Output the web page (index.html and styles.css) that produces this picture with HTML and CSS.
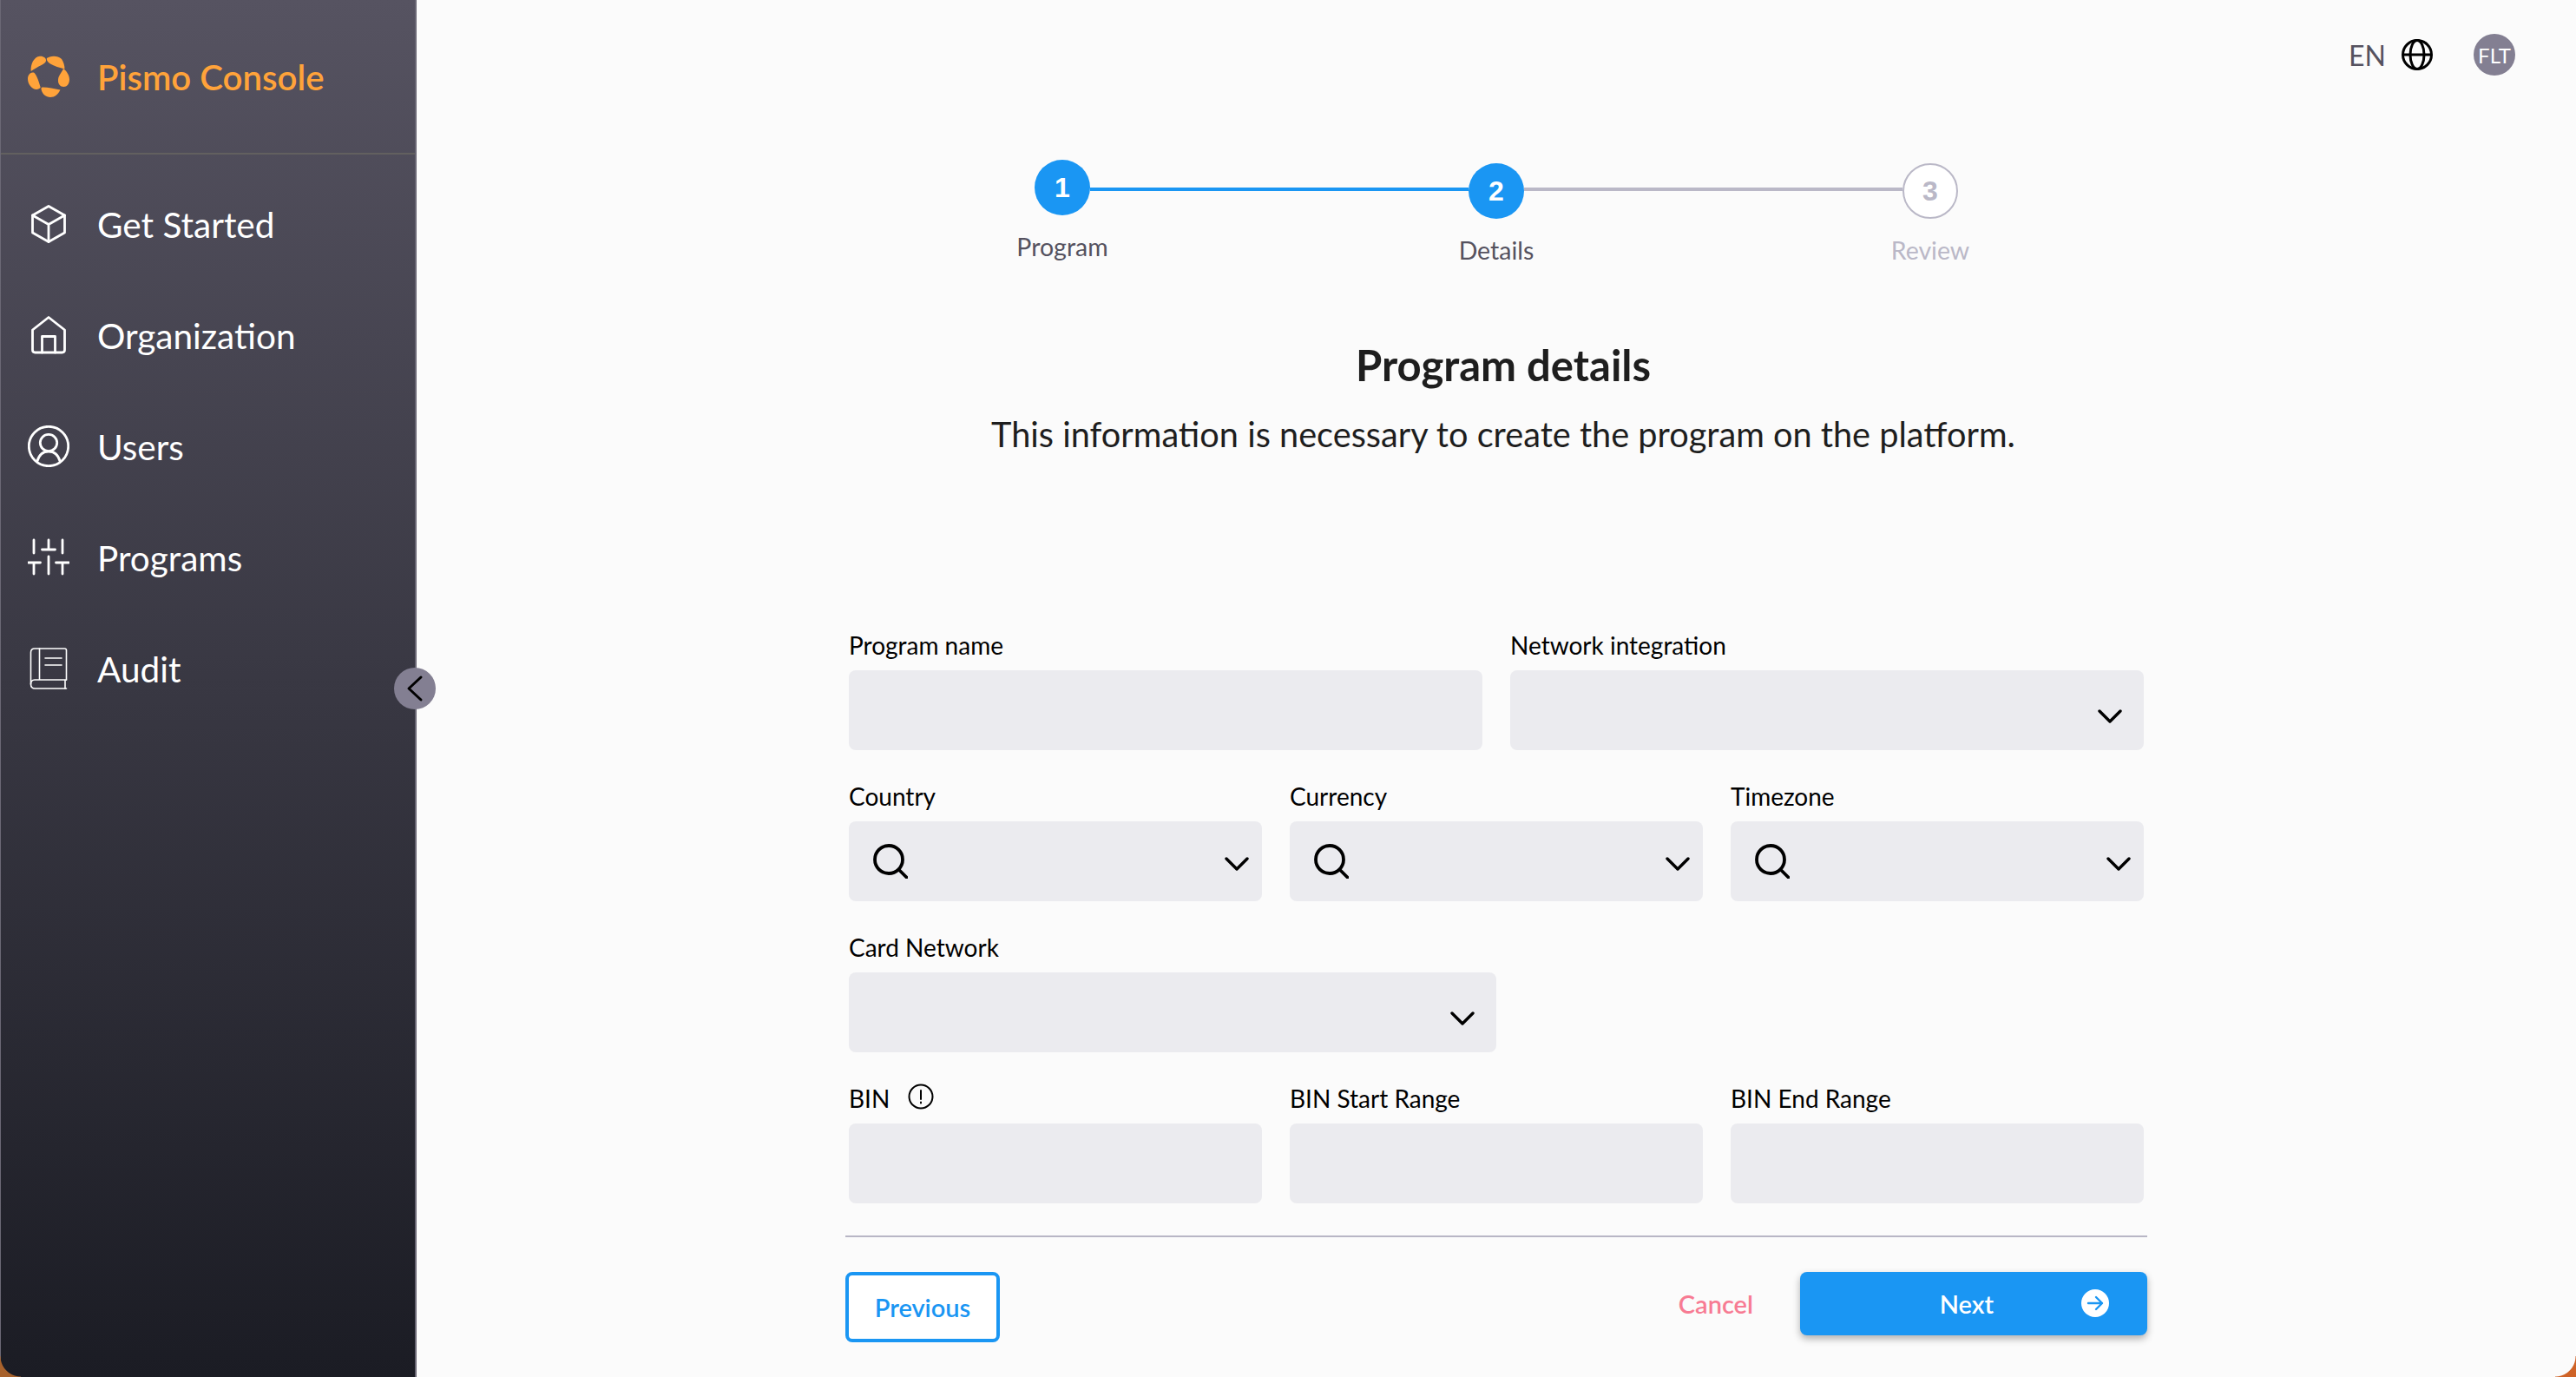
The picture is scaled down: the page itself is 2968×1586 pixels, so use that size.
FILE: index.html
```html
<!DOCTYPE html>
<html lang="en">
<head>
    <meta charset="UTF-8">
    <meta name="viewport" content="width=device-width, initial-scale=1.0">
    <title>Pismo Console</title>
    <link rel="stylesheet" href="styles.css">
</head>
<body>
    <div class="app">
        <!-- Sidebar -->
        <aside class="sidebar">
            <div class="brand">
                <svg class="nav-icon" viewBox="0 0 48 48" fill="#ffa33a">
                    <path d="M22 3C25 .5 34-1 39 4c2 3 3.500 7 3.500 11.500C37 14 30 12 26 9.500c-2-1.200-5-4-4-6.500z"/>
                    <path d="M41 15c4 3 7 8 7 12.500 0 5-3 8.500-6.500 8.500-4 0-7-3-6.500-8.500.5-4.500 4-8 6-12.500z"/>
                    <path d="M37.500 39.500c-2.500 5-6.500 8.500-11.500 8.500-5 0-9.500-3.500-10.500-9.500-.2-1.500.5-2 2-2 6 0 13 1.500 20 3z"/>
                    <path d="M5.500 19.500C2 20 0 23 0 27c0 6 5 12 10 12 2 0 4-1 4.700-2.500C13 31 11 24 8 20.500c-.5-1-1.500-1.200-2.500-1z"/>
                    <path d="M3.700 18C3 10 7 1.500 14 .8c4-.3 7.500 2.200 7 5.200-.5 4-9 6-17.300 12z"/>
                </svg>
                <span class="brand-name">Pismo Console</span>
            </div>
            <nav class="nav">
                <a class="nav-item">
                    <svg class="nav-icon stroke-icon" viewBox="0 0 48 48">
                        <path d="M24 3.500L42.500 14v20L24 44.500 5.500 34V14z"/>
                        <path d="M5.500 14L24 24.500 42.500 14M24 24.500v20"/>
                    </svg>
                    Get Started
                </a>
                <a class="nav-item">
                    <svg class="nav-icon stroke-icon" viewBox="0 0 48 48">
                        <path d="M24 3.500L42.500 18v23q0 3-3 3h-31q-3 0-3-3V18z"/>
                        <path d="M16.500 44V25.500h15V44"/>
                    </svg>
                    Organization
                </a>
                <a class="nav-item">
                    <svg class="nav-icon stroke-icon" viewBox="0 0 48 48">
                        <circle cx="24" cy="24" r="22.700"/>
                        <circle cx="24" cy="20" r="9.700"/>
                        <path d="M11 41c2-7 7-11 13-11s11 4 13 11"/>
                    </svg>
                    Users
                </a>
                <a class="nav-item">
                    <svg class="nav-icon stroke-icon" viewBox="0 0 48 48">
                        <path d="M7 4v15M.5 30h14M7 30v13M24 4v11M16.500 15h15M24 23v20M40 4v15M32.500 30h15M40 30v13"/>
                    </svg>
                    Programs
                </a>
                <a class="nav-item">
                    <svg class="nav-icon stroke-icon thin" viewBox="0 0 48 48">
                        <path d="M44.500 37V3q0-2-2-2H8Q3.500 1 3.500 5.500V42q0 5 5 5h36"/>
                        <path d="M44.500 37H8q-4.500 0-4.500 5M13.500 1v36M20 12h19M20 20h19M43 37v10"/>
                    </svg>
                    Audit
                </a>
            </nav>
            <button class="collapse-btn">
                <svg viewBox="0 0 48 48" class="collapse-icon"><path d="M31 11L17 24l14 13"/></svg>
            </button>
        </aside>

        <main class="main">
            <div class="topbar">
                <span class="lang">EN</span>
                <svg class="globe" viewBox="0 0 36 36">
                    <circle cx="18" cy="18" r="16.500"/>
                    <ellipse cx="18" cy="18" rx="8" ry="16.500"/>
                    <path d="M1.500 18h33"/>
                </svg>
                <div class="avatar">FLT</div>
            </div>

            <!-- Steps -->
            <div class="stepper">
                <div class="step step-first">
                    <div class="step-dot">1</div>
                    <div class="step-label">Program</div>
                </div>
                <div class="step-line"></div>
                <div class="step">
                    <div class="step-dot">2</div>
                    <div class="step-label">Details</div>
                </div>
                <div class="step-line step-line-off"></div>
                <div class="step step-off">
                    <div class="step-dot">3</div>
                    <div class="step-label">Review</div>
                </div>
            </div>

            <div class="intro">
                <h1>Program details</h1>
                <p>This information is necessary to create the program on the platform.</p>
            </div>

            <form class="form">
                <div class="form-row cols-2">
                    <div class="field">
                        <label>Program name</label>
                        <div class="box"></div>
                    </div>
                    <div class="field">
                        <label>Network integration</label>
                        <div class="box box-wide">
                            <svg class="chevron" viewBox="0 0 28 16"><path d="M2 2l12 12L26 2"/></svg>
                        </div>
                    </div>
                </div>
                <div class="form-row cols-3">
                    <div class="field">
                        <label>Country</label>
                        <div class="box box-search">
                            <svg class="search" viewBox="0 0 40 40"><circle cx="18" cy="18" r="16"/><path d="M29.500 29.500L38.500 38.500"/></svg>
                            <svg class="chevron chevron-low" viewBox="0 0 28 16"><path d="M2 2l12 12L26 2"/></svg>
                        </div>
                    </div>
                    <div class="field">
                        <label>Currency</label>
                        <div class="box box-search">
                            <svg class="search" viewBox="0 0 40 40"><circle cx="18" cy="18" r="16"/><path d="M29.500 29.500L38.500 38.500"/></svg>
                            <svg class="chevron chevron-low" viewBox="0 0 28 16"><path d="M2 2l12 12L26 2"/></svg>
                        </div>
                    </div>
                    <div class="field">
                        <label>Timezone</label>
                        <div class="box box-search">
                            <svg class="search" viewBox="0 0 40 40"><circle cx="18" cy="18" r="16"/><path d="M29.500 29.500L38.500 38.500"/></svg>
                            <svg class="chevron chevron-low" viewBox="0 0 28 16"><path d="M2 2l12 12L26 2"/></svg>
                        </div>
                    </div>
                </div>
                <div class="form-row tight">
                    <div class="field">
                        <label>Card Network</label>
                        <div class="box box-wide">
                            <svg class="chevron" viewBox="0 0 28 16"><path d="M2 2l12 12L26 2"/></svg>
                        </div>
                    </div>
                </div>
                <div class="form-row cols-3">
                    <div class="field">
                        <label>BIN
                            <svg class="info" viewBox="0 0 30 30"><circle cx="15" cy="15" r="13.500"/><path d="M15 8v10M15 21.500v1"/></svg>
                        </label>
                        <div class="box"></div>
                    </div>
                    <div class="field">
                        <label>BIN Start Range</label>
                        <div class="box"></div>
                    </div>
                    <div class="field">
                        <label>BIN End Range</label>
                        <div class="box"></div>
                    </div>
                </div>
            </form>

            <div class="actions">
                <button class="btn-prev">Previous</button>
                <div class="actions-right">
                    <a class="cancel">Cancel</a>
                    <button class="btn-next">
                        Next
                        <span class="next-arrow">
                            <svg viewBox="0 0 32 32"><path d="M8 16h16M17 9l7 7-7 7"/></svg>
                        </span>
                    </button>
                </div>
            </div>
        </main>
        <div class="corner corner-left"></div>
        <div class="corner corner-right"></div>
    </div>
</body>
</html>
```

FILE: styles.css
```css
* {
    box-sizing: border-box;
}
html, body {
    margin: 0;
    padding: 0;
}
body {
    font-family: Lato, Arial, sans-serif;
    background: #fbfbfb;
}
.app {
    display: flex;
    position: relative;
    width: 2968px;
    height: 1586px;
    overflow: hidden;
}

/* Sidebar */
.sidebar {
    position: relative;
    width: 480px;
    height: 100%;
    flex-shrink: 0;
    background: linear-gradient(180deg, #565361 0%, #1b1c24 100%);
    border-left: 1px solid #6b6875;
    border-right: 2px solid #6b6875;
    color: #fff;
}
.brand {
    display: flex;
    align-items: center;
    height: 178px;
    padding-left: 31px;
    gap: 32px;
    border-bottom: 2px solid #62605f;
}
.brand-name {
    color: #ffa33a;
    font-size: 40.200px;
    font-weight: 600;
}
.nav {
    display: flex;
    flex-direction: column;
    padding-top: 16px;
}
.nav-item {
    display: flex;
    align-items: center;
    height: 128px;
    padding-left: 31px;
    gap: 32px;
    font-size: 40.500px;
    color: #fff;
}
.nav-icon {
    width: 48px;
    height: 48px;
    flex-shrink: 0;
}
.stroke-icon {
    fill: none;
    stroke: #fff;
    stroke-width: 2.800;
    stroke-linecap: round;
    stroke-linejoin: round;
}
.stroke-icon.thin {
    stroke-width: 1.600;
}
.collapse-btn {
    position: absolute;
    right: -24px;
    top: 769px;
    width: 48px;
    height: 48px;
    padding: 0;
    border: 0;
    border-radius: 50%;
    background: #837f92;
}
.collapse-icon {
    display: block;
    fill: none;
    stroke: #000;
    stroke-width: 3;
    stroke-linecap: round;
    stroke-linejoin: round;
}

/* Main */
.main {
    flex: 1;
    display: flex;
    flex-direction: column;
    align-items: center;
}
.topbar {
    align-self: stretch;
    display: flex;
    align-items: center;
    justify-content: flex-end;
    height: 48px;
    margin-top: 39px;
    padding-right: 70px;
}
.lang {
    font-size: 32px;
    color: #55525f;
}
.globe {
    width: 36px;
    height: 36px;
    margin-left: 18px;
    fill: none;
    stroke: #000;
    stroke-width: 3;
}
.avatar {
    display: flex;
    align-items: center;
    justify-content: center;
    width: 48px;
    height: 48px;
    margin-left: 47px;
    border-radius: 50%;
    background: #837f92;
    color: #fff;
    font-size: 24px;
}

/* Steps */
.stepper {
    display: flex;
    width: 1064px;
    margin-top: 97px;
}
.step {
    display: flex;
    flex-direction: column;
    align-items: center;
    width: 64px;
    margin-top: 4px;
}
.step-first {
    margin-top: 0;
}
.step-dot {
    display: flex;
    align-items: center;
    justify-content: center;
    flex-shrink: 0;
    width: 64px;
    height: 64px;
    border-radius: 50%;
    background: #1a96f3;
    color: #fff;
    font-size: 32px;
    font-weight: 700;
    font-family: "Liberation Sans", Arial, sans-serif;
}
.step-label {
    margin-top: 19px;
    font-size: 28.500px;
    line-height: 34px;
    color: #55525f;
    white-space: nowrap;
}
.step-off .step-dot {
    background: #fff;
    border: 2px solid #bab8c7;
    color: #bab8c7;
}
.step-off .step-label {
    color: #bab8c7;
}
.step-line {
    flex: 1;
    height: 4px;
    margin-top: 32px;
    background: #1a96f3;
}
.step-line-off {
    background: #bab8c7;
}

/* Heading */
.intro {
    margin-left: 16px;
    margin-top: 85px;
    text-align: center;
}
.intro h1 {
    margin: 0;
    font-size: 49px;
    line-height: 60px;
    font-weight: 700;
    color: #1e1e1e;
}
.intro p {
    margin: 25px 0 0;
    font-size: 39.700px;
    line-height: 50px;
    color: #1e1e1e;
}

/* Form */
.form {
    display: flex;
    flex-direction: column;
    width: 1492px;
    margin-top: 201px;
    gap: 36px;
}
.form-row {
    display: grid;
    gap: 32px;
}
.cols-2 {
    grid-template-columns: 730px 730px;
}
.cols-3 {
    grid-template-columns: repeat(3, 476px);
}
.tight {
    grid-template-columns: 746px;
}
.field label {
    display: flex;
    align-items: center;
    height: 34px;
    margin-bottom: 12px;
    font-size: 28px;
    color: #000;
}
.box {
    display: flex;
    align-items: center;
    justify-content: flex-end;
    height: 92px;
    border-radius: 8px;
    background: #ebebef;
}
.box-wide {
    padding-right: 25px;
}
.box-search {
    justify-content: space-between;
    padding: 0 15px 0 28px;
}
.chevron {
    width: 28px;
    height: 16px;
    margin-top: 14px;
    fill: none;
    stroke: #000;
    stroke-width: 3.400;
    stroke-linecap: round;
    stroke-linejoin: round;
}
.chevron-low {
    margin-top: 6px;
}
.search {
    width: 40px;
    height: 40px;
    fill: none;
    stroke: #000;
    stroke-width: 3.800;
    stroke-linecap: round;
}
.info {
    width: 30px;
    height: 30px;
    margin-left: 21px;
    margin-top: -4px;
    fill: none;
    stroke: #000;
    stroke-width: 2;
    stroke-linecap: round;
}

/* Buttons */
.actions {
    display: flex;
    justify-content: space-between;
    align-items: flex-start;
    width: 1500px;
    margin-top: 37px;
    padding-top: 40px;
    border-top: 2px solid #b8b6c5;
}
.actions-right {
    display: flex;
    align-items: center;
    gap: 54px;
}
.btn-prev {
    width: 178px;
    height: 81px;
    border: 4px solid #1a96f3;
    border-radius: 8px;
    background: #fff;
    color: #1a96f3;
    font-family: inherit;
    font-size: 29px;
    font-weight: 600;
}
.cancel {
    color: #f77b93;
    font-size: 29px;
    font-weight: 600;
}
.btn-next {
    position: relative;
    width: 400px;
    height: 73px;
    padding: 0 16px 0 0;
    border: 0;
    border-radius: 8px;
    background: #1a96f3;
    box-shadow: 0 4px 8px rgba(0,0,0,0.3);
    color: #fff;
    font-family: inherit;
    font-size: 29px;
    font-weight: 600;
}
.next-arrow {
    position: absolute;
    right: 44px;
    top: 20px;
    width: 32px;
    height: 32px;
    border-radius: 50%;
    background: #fff;
}
.next-arrow svg {
    display: block;
    fill: none;
    stroke: #1a96f3;
    stroke-width: 2.400;
    stroke-linecap: round;
    stroke-linejoin: round;
}

/* Window corners, wallpaper shows through */
.corner {
    position: absolute;
    bottom: 0;
    width: 24px;
    height: 24px;
}
.corner-right {
    right: 0;
    background: radial-gradient(circle at 0 0, transparent 23px, #cf6327 24px);
}
.corner-left {
    left: 0;
    background: radial-gradient(circle at 100% 0, transparent 23px, #a8622c 24px);
}
```
